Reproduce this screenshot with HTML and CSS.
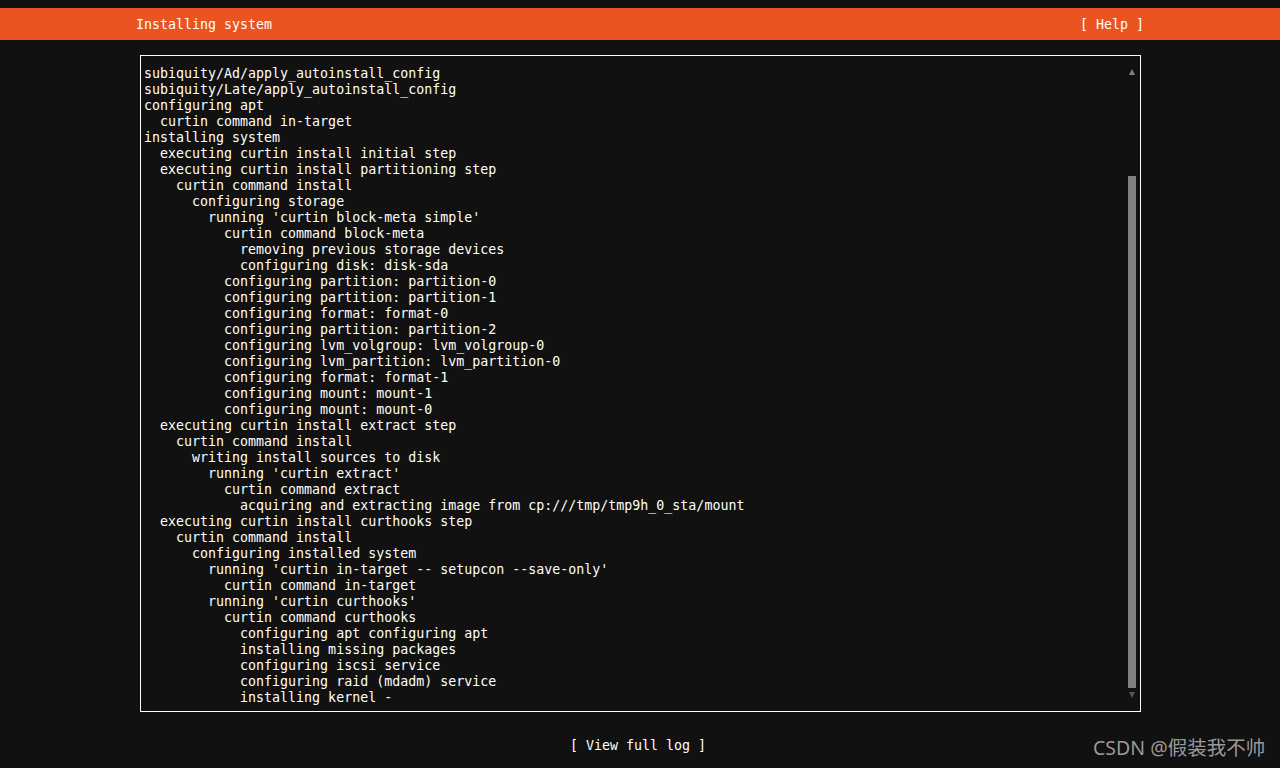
FILE: index.html
```html
<!DOCTYPE html>
<html>
<head>
<meta charset="utf-8">
<link rel="stylesheet" href="styles.css">
</head>
<body>
<div class="screen">
  <header class="titlebar">
    <span class="title">Installing system</span>
    <span class="help">[ Help ]</span>
  </header>
  <main class="logbox">
    <pre class="log">subiquity/Ad/apply_autoinstall_config
subiquity/Late/apply_autoinstall_config
configuring apt
  curtin command in-target
installing system
  executing curtin install initial step
  executing curtin install partitioning step
    curtin command install
      configuring storage
        running 'curtin block-meta simple'
          curtin command block-meta
            removing previous storage devices
            configuring disk: disk-sda
          configuring partition: partition-0
          configuring partition: partition-1
          configuring format: format-0
          configuring partition: partition-2
          configuring lvm_volgroup: lvm_volgroup-0
          configuring lvm_partition: lvm_partition-0
          configuring format: format-1
          configuring mount: mount-1
          configuring mount: mount-0
  executing curtin install extract step
    curtin command install
      writing install sources to disk
        running 'curtin extract'
          curtin command extract
            acquiring and extracting image from cp:///tmp/tmp9h_0_sta/mount
  executing curtin install curthooks step
    curtin command install
      configuring installed system
        running 'curtin in-target -- setupcon --save-only'
          curtin command in-target
        running 'curtin curthooks'
          curtin command curthooks
            configuring apt configuring apt
            installing missing packages
            configuring iscsi service
            configuring raid (mdadm) service
            installing kernel -</pre>
    <div class="scrollbar">
      <div class="arrow up"></div>
      <div class="thumb"></div>
      <div class="arrow down"></div>
    </div>
  </main>
  <footer class="footer">
    <span class="button">[ View full log ]</span>
  </footer>
  <div class="watermark">CSDN @假装我不帅</div>
</div>
</body>
</html>
```
FILE: styles.css
```css
html, body {
  margin: 0;
  padding: 0;
  background: #111111;
}
.screen {
  width: 1280px;
  height: 768px;
  position: relative;
  overflow: hidden;
  font-family: "DejaVu Sans Mono", "Liberation Mono", monospace;
  font-size: 13.3px;
  color: #ffffff;
}
.titlebar {
  margin-top: 8px;
  height: 32px;
  box-sizing: border-box;
  padding: 2px 136px 0;
  background: #e95420;
  display: flex;
  align-items: center;
  justify-content: space-between;
  line-height: 16px;
}
.logbox {
  margin: 15px 0 0 140px;
  width: 999px;
  height: 655px;
  border: 1px solid #ffffff;
  display: flex;
}
.log {
  margin: 0;
  padding: 10px 0 0 3px;
  flex: 1;
  font: inherit;
  line-height: 16px;
  white-space: pre;
  color: #ffffff;
}
.scrollbar {
  width: 8px;
  margin: 8px 4px 0 0;
  height: 640px;
  display: flex;
  flex-direction: column;
  align-items: center;
}
.arrow {
  width: 0;
  height: 0;
  border-left: 3px solid transparent;
  border-right: 3px solid transparent;
}
.arrow.up {
  margin-top: 5px;
  height: 6px;
  box-sizing: border-box;
  border-bottom: 6px solid #808080;
  margin-bottom: 101px;
}
.arrow.down {
  margin-top: 4px;
  border-top: 6px solid #555555;
}
.thumb {
  width: 8px;
  height: 512px;
  background: #808080;
}
.footer {
  margin-top: 26px;
  padding-right: 4px;
  display: flex;
  justify-content: center;
  line-height: 16px;
}
.watermark {
  position: absolute;
  left: 1093px;
  top: 734px;
  font-family: "Noto Sans", "Noto Sans CJK SC", sans-serif;
  font-size: 19.5px;
  line-height: 28px;
  color: rgba(200, 200, 200, 0.75);
}
```
